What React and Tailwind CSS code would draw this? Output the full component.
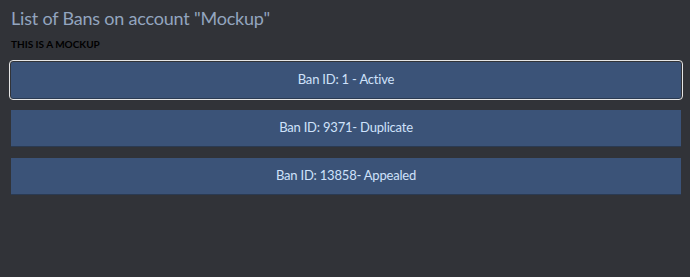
const bans = [
  { id: "1", label: "Ban ID: 1 - Active", focused: true },
  { id: "9371", label: "Ban ID: 9371- Duplicate" },
  { id: "13858", label: "Ban ID: 13858- Appealed" },
];

function App() {
  return (
    <div
      className="h-screen bg-[#313338] pl-[11px] pr-[9px] pt-[6px]"
      style={{ fontFamily: "Lato, 'Open Sans', sans-serif" }}
    >
      <h1 className="text-[18px] leading-[24px] tracking-[-0.2px] text-[#93a5bf]">
        List of Bans on account "Mockup"
      </h1>
      <p className="mt-[8px] text-[10px] font-bold leading-[13px] text-black">
        THIS IS A MOCKUP
      </p>
      <div className="mt-[11px] flex flex-col gap-[12px]">
        {bans.map((ban) => (
          <button
            key={ban.id}
            className={
              "h-[36px] w-full bg-[#3b5378] text-[13px] tracking-[-0.2px] text-[#cfe2fb] shadow-[0_1px_0_#2a3a52] " +
              (ban.focused
                ? "rounded-[2px] outline outline-1 outline-offset-1 outline-[#e6e6e6]"
                : "")
            }
          >
            {ban.label}
          </button>
        ))}
      </div>
    </div>
  );
}

export default App;
